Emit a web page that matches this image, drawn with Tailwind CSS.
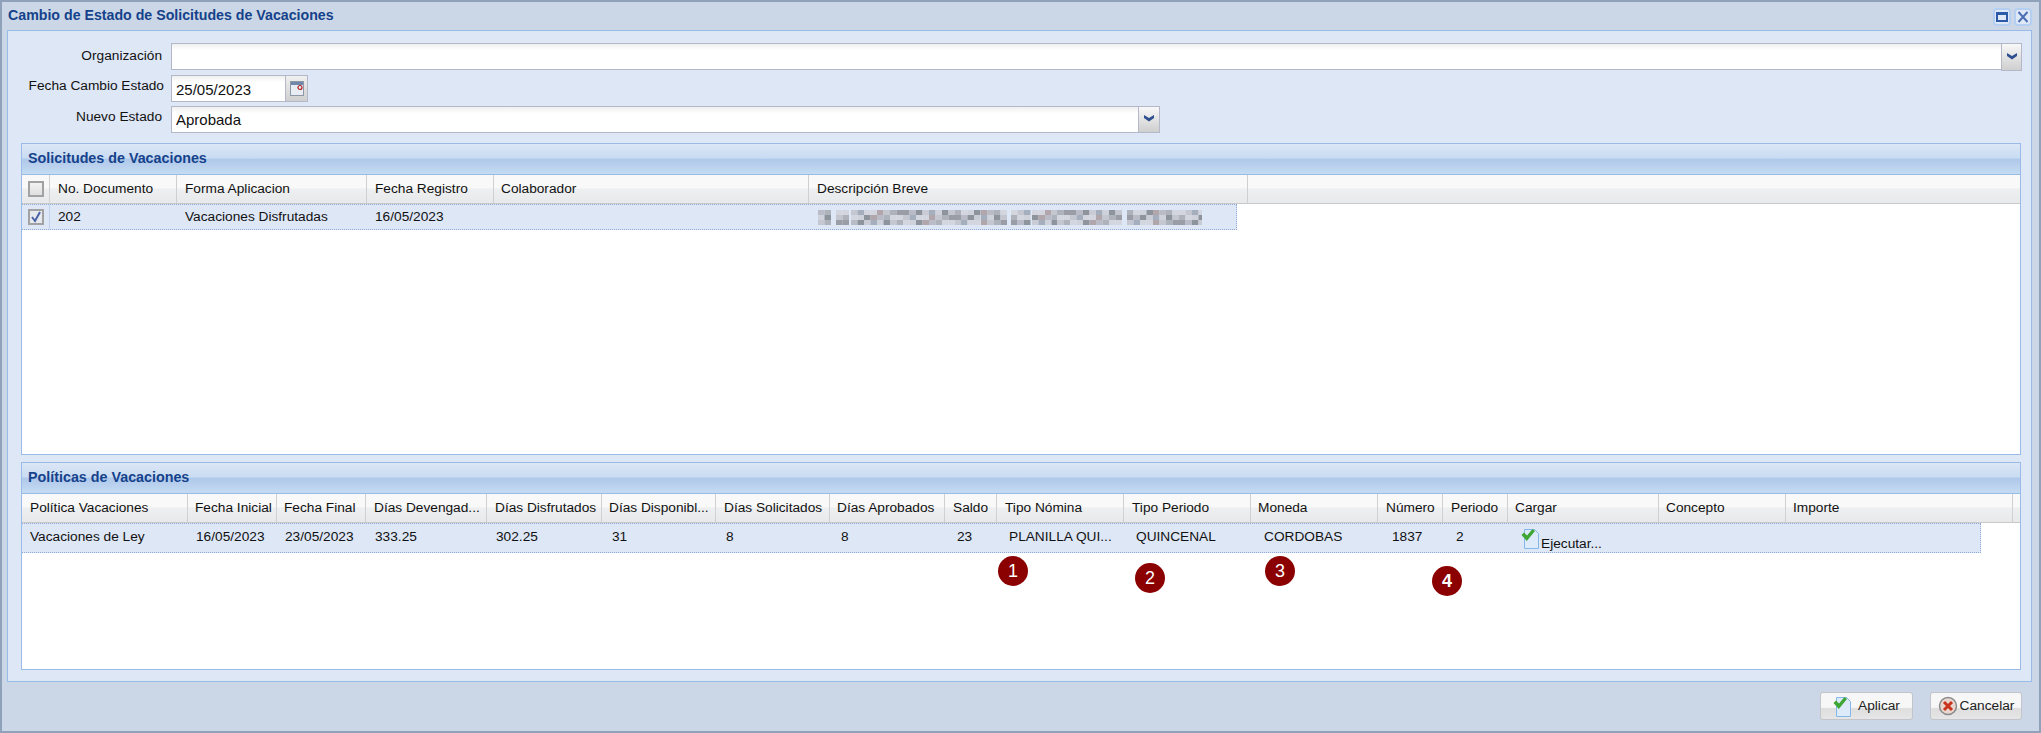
<!DOCTYPE html>
<html lang="es">
  <head>
    <meta charset="UTF-8">
    <title>Cambio de Estado de Solicitudes de Vacaciones</title>
    <script src="https://cdn.jsdelivr.net/npm/@tailwindcss/browser@4"></script>
  </head>

  <body class="bg-[#cbd7e6]">
    <div class="w-[2041px] h-[733px] overflow-hidden flex flex-col bg-[#cbd7e6] border-2 border-[#8fa2ba] font-['Liberation_Sans',Arial,sans-serif] text-[13.7px] text-[#111]">

      <!-- title -->
      <div class="h-[28px] shrink-0 flex items-center justify-between pl-[6px] pr-[7px]">
        <span class="font-bold text-[#15428b] text-[14.2px]">Cambio de Estado de Solicitudes de Vacaciones</span>
        <div class="flex gap-[3px] mt-[2px]">
          <div class="w-[18px] h-[18px] rounded-[4px] border-2 border-[#b5cff2] bg-[#dfe8f6] flex items-center justify-center">
            <div class="w-[12px] h-[10px] border-2 border-[#2c5aa8] border-t-[3px]"></div>
          </div>
          <div class="w-[18px] h-[18px] rounded-[4px] border-2 border-[#b5cff2] bg-[#dfe8f6] flex items-center justify-center">
            <svg width="12" height="12" viewBox="0 0 12 12"><path d="M1.500 1l9 10M10.500 1l-9 10" stroke="#4a6fb5" stroke-width="2" fill="none"/></svg>
          </div>
        </div>
      </div>

      <!-- main panel -->
      <div class="ml-[5px] mr-[7px] h-[652px] shrink-0 bg-[#dee7f6] border border-[#99bbe8] pt-[12px] px-[13px]">

        <div class="flex h-[27px]">
          <label class="w-[150px] shrink-0 text-right pr-[9px] pt-[3px]">Organización</label>
          <div class="w-[1851px] flex shrink-0">
            <div class="flex-1 border border-[#b5b8c8] border-r-0 bg-gradient-to-b from-[#efefef] to-white to-[25%]"></div>
            <div class="w-[21px] h-[28px] border border-[#b5b8c8] bg-gradient-to-b from-[#f8f8f8] to-[#cfcfcf] flex justify-center pt-[8px]">
              <svg width="12" height="8" viewBox="0 0 12 8"><path d="M1 1l5 3 5-3v3L6 7.500 1 4z" fill="#2f4f8f"/></svg>
            </div>
          </div>
        </div>

        <div class="flex h-[27px] mt-[5px]">
          <label class="w-[150px] shrink-0 text-right pr-[7px] pt-[1px]">Fecha Cambio Estado</label>
          <div class="w-[115px] border border-[#b5b8c8] bg-gradient-to-b from-[#efefef] to-white to-[25%] pl-[4px] pt-[3px] text-[15px]">25/05/2023</div>
          <div class="w-[22px] border border-[#b5b8c8] border-l-0 bg-gradient-to-b from-[#f0f0f0] to-[#cfcfcf] flex justify-center pt-[5px]">
            <svg width="14" height="15" viewBox="0 0 14 15"><rect x="0.500" y="0.500" width="13" height="14" fill="#e8edf3" stroke="#8c98a8"/><rect x="1" y="1" width="12" height="3" fill="#6f87a8"/><circle cx="10" cy="6.500" r="2" fill="none" stroke="#b02020" stroke-width="1.200"/></svg>
          </div>
        </div>

        <div class="flex h-[27px] mt-[4px]">
          <label class="w-[150px] shrink-0 text-right pr-[9px] pt-[1px]">Nuevo Estado</label>
          <div class="w-[967px] border border-[#b5b8c8] border-r-0 bg-gradient-to-b from-[#efefef] to-white to-[25%] pl-[4px] pt-[2px] text-[15px]">Aprobada</div>
          <div class="w-[22px] border border-[#b5b8c8] bg-gradient-to-b from-[#f8f8f8] to-[#cfcfcf] flex justify-center pt-[7px]">
            <svg width="12" height="8" viewBox="0 0 12 8"><path d="M1 1l5 3 5-3v3L6 7.500 1 4z" fill="#2f4f8f"/></svg>
          </div>
        </div>

        <!-- solicitudes -->
        <div class="mt-[10px] h-[312px] w-[2000px] border border-[#99bbe8] bg-white flex flex-col">
          <div class="h-[31px] shrink-0 border-b border-[#99bbe8] bg-[linear-gradient(#dbe6f6_0,#c9dcf2_47%,#afc8ea_50%,#c5dbf2_100%)] pl-[6px] flex items-center font-bold text-[#15428b] text-[14.3px]">Solicitudes de Vacaciones</div>
          <div class="grid grid-cols-[28px_127px_190px_127px_315px_439px_1fr] h-[29px] shrink-0 border-b border-[#c9c9c9] bg-[linear-gradient(#f9f9f9_0,#f9f9f9_45%,#eeeff0_50%,#e8e9eb_100%)]">
            <div class="border-r border-[#d0d0d0] flex items-center justify-center">
              <div class="w-[16px] h-[16px] border-2 border-[#a2a2a2] bg-[linear-gradient(#f2f2f2,#e0e0e0)]"></div>
            </div>
            <div class="border-r border-[#d0d0d0] pl-[8px] flex items-center">No. Documento</div>
            <div class="border-r border-[#d0d0d0] pl-[8px] flex items-center">Forma Aplicacion</div>
            <div class="border-r border-[#d0d0d0] pl-[8px] flex items-center">Fecha Registro</div>
            <div class="border-r border-[#d0d0d0] pl-[7px] flex items-center">Colaborador</div>
            <div class="border-r border-[#d0d0d0] pl-[8px] flex items-center">Descripción Breve</div>
            <div></div>
          </div>
          <div class="grid grid-cols-[28px_127px_190px_127px_315px_428px] w-[1215px] h-[26px] shrink-0 bg-[#dee7f6] border-y border-r border-dotted border-[#8fa8d6]">
            <div class="border-r border-[#bcd2f0] flex items-center justify-center">
              <div class="w-[16px] h-[16px] border-2 border-[#a2a2a2] bg-[#e6e9ee] flex items-center justify-center">
                <svg width="12" height="12" viewBox="0 0 12 12"><path d="M2 6l3 4 5-9" stroke="#4a62a8" stroke-width="2" fill="none"/></svg>
              </div>
            </div>
            <div class="pl-[8px] flex items-center">202</div>
            <div class="pl-[8px] flex items-center">Vacaciones Disfrutadas</div>
            <div class="pl-[8px] flex items-center">16/05/2023</div>
            <div></div>
            <div class="pl-[9px] flex items-center">
              <svg id="blur" width="384" height="15" viewBox="0 0 384 15" class="block"></svg>
            </div>
          </div>
        </div>

        <!-- politicas -->
        <div class="relative mt-[7px] h-[208px] w-[2000px] border border-[#99bbe8] bg-white flex flex-col">
          <div class="h-[31px] shrink-0 border-b border-[#99bbe8] bg-[linear-gradient(#dbe6f6_0,#c9dcf2_47%,#afc8ea_50%,#c5dbf2_100%)] pl-[6px] flex items-center font-bold text-[#15428b] text-[14.3px]">Políticas de Vacaciones</div>
          <div class="grid grid-cols-[166px_89px_89px_121px_115px_114px_114px_115px_52px_127px_127px_127px_65px_65px_151px_127px_227px_1fr] h-[29px] shrink-0 border-b border-[#c9c9c9] bg-[linear-gradient(#f9f9f9_0,#f9f9f9_45%,#eeeff0_50%,#e8e9eb_100%)] whitespace-nowrap overflow-hidden">
            <div class="border-r border-[#d0d0d0] pl-[8px] flex items-center">Política Vacaciones</div>
            <div class="border-r border-[#d0d0d0] pl-[7px] flex items-center">Fecha Inicial</div>
            <div class="border-r border-[#d0d0d0] pl-[7px] flex items-center">Fecha Final</div>
            <div class="border-r border-[#d0d0d0] pl-[8px] flex items-center">Días Devengad...</div>
            <div class="border-r border-[#d0d0d0] pl-[8px] flex items-center">Días Disfrutados</div>
            <div class="border-r border-[#d0d0d0] pl-[7px] flex items-center">Días Disponibl...</div>
            <div class="border-r border-[#d0d0d0] pl-[8px] flex items-center">Días Solicitados</div>
            <div class="border-r border-[#d0d0d0] pl-[7px] flex items-center">Días Aprobados</div>
            <div class="border-r border-[#d0d0d0] pl-[8px] flex items-center">Saldo</div>
            <div class="border-r border-[#d0d0d0] pl-[8px] flex items-center">Tipo Nómina</div>
            <div class="border-r border-[#d0d0d0] pl-[8px] flex items-center">Tipo Periodo</div>
            <div class="border-r border-[#d0d0d0] pl-[7px] flex items-center">Moneda</div>
            <div class="border-r border-[#d0d0d0] pl-[8px] flex items-center">Número</div>
            <div class="border-r border-[#d0d0d0] pl-[8px] flex items-center">Periodo</div>
            <div class="border-r border-[#d0d0d0] pl-[7px] flex items-center">Cargar</div>
            <div class="border-r border-[#d0d0d0] pl-[7px] flex items-center">Concepto</div>
            <div class="border-r border-[#d0d0d0] pl-[7px] flex items-center">Importe</div>
            <div></div>
          </div>
          <div class="grid grid-cols-[166px_89px_89px_121px_115px_114px_114px_115px_52px_127px_127px_127px_65px_65px_472px] w-[1959px] h-[30px] shrink-0 bg-[#dee7f6] border-y border-r border-dotted border-[#8fa8d6] whitespace-nowrap">
            <div class="pl-[8px] pb-[5px] flex items-center">Vacaciones de Ley</div>
            <div class="pl-[8px] pb-[5px] flex items-center">16/05/2023</div>
            <div class="pl-[8px] pb-[5px] flex items-center">23/05/2023</div>
            <div class="pl-[9px] pb-[5px] flex items-center">333.25</div>
            <div class="pl-[9px] pb-[5px] flex items-center">302.25</div>
            <div class="pl-[10px] pb-[5px] flex items-center">31</div>
            <div class="pl-[10px] pb-[5px] flex items-center">8</div>
            <div class="pl-[11px] pb-[5px] flex items-center">8</div>
            <div class="pl-[12px] pb-[5px] flex items-center">23</div>
            <div class="pl-[12px] pb-[5px] flex items-center">PLANILLA QUI...</div>
            <div class="pl-[12px] pb-[5px] flex items-center">QUINCENAL</div>
            <div class="pl-[13px] pb-[5px] flex items-center">CORDOBAS</div>
            <div class="pl-[14px] pb-[5px] flex items-center">1837</div>
            <div class="pl-[13px] pb-[5px] flex items-center">2</div>
            <div class="pl-[13px] flex items-start pt-[4px]">
              <svg width="19" height="21" viewBox="0 0 19 21" class="shrink-0"><path d="M3.500 1.500h10l4 4v15h-14z" fill="#dceafa" stroke="#85b8ea"/><path d="M0.500 7L3 4.500l3 3L11.500 1 14 3 5.800 13z" fill="#3fa535"/></svg>
              <span class="pt-[6px] ml-[1px]">Ejecutar...</span>
            </div>
          </div>
          <!-- numbered marks over the grid -->
          <div class="absolute left-[976px] top-[93px] w-[30px] h-[30px] rounded-full bg-[#8b0000] text-white flex items-center justify-center text-[18px]">1</div>
          <div class="absolute left-[1113px] top-[100px] w-[30px] h-[30px] rounded-full bg-[#8b0000] text-white flex items-center justify-center text-[18px]">2</div>
          <div class="absolute left-[1243px] top-[93px] w-[30px] h-[30px] rounded-full bg-[#8b0000] text-white flex items-center justify-center text-[18px]">3</div>
          <div class="absolute left-[1410px] top-[103px] w-[30px] h-[30px] rounded-full bg-[#8b0000] text-white flex items-center justify-center text-[18px] font-bold">4</div>
        </div>
      </div>

      <!-- buttons -->
      <div class="flex justify-end gap-[17px] pr-[17px] pt-[10px]">
        <button class="w-[93px] h-[28px] rounded-[3px] border border-[#c2c5c9] bg-[linear-gradient(#f7f7f7_0,#f7f7f7_55%,#dedede_60%,#e6e6e6_100%)] flex items-center justify-center gap-[6px] text-[#222]">
          <svg width="19" height="21" viewBox="0 0 19 21"><path d="M3.500 1.500h10l4 4v15h-14z" fill="#dceafa" stroke="#85b8ea"/><path d="M0.500 7L3 4.500l3 3L11.500 1 14 3 5.800 13z" fill="#3fa535"/></svg>
          Aplicar
        </button>
        <button class="w-[92px] h-[28px] rounded-[3px] border border-[#c2c5c9] bg-[linear-gradient(#f7f7f7_0,#f7f7f7_55%,#dedede_60%,#e6e6e6_100%)] flex items-center justify-center gap-[2px] text-[#222]">
          <svg width="20" height="20" viewBox="0 0 20 20"><circle cx="10" cy="10" r="8.500" fill="#e8d6cf" stroke="#8a8a8a" stroke-width="1.500"/><path d="M6 6l8 8M14 6l-8 8" stroke="#c8341c" stroke-width="3"/></svg>
          Cancelar
        </button>
      </div>
    </div>

    <script>
      // mosaic over the blurred description text
      var runs = [[0,13],[18,9],[33,105],[143,16],[163,25],[193,16],[214,20],[239,65],[309,75]];
      var colors = ['#c4c7cf','#aeb2ba','#d3d6de','#8e949c','#b9bcc6','#c9ccd4','#9a9ca6','#b0a6ac','#a4aebc','#cfd2da','#868c94'];
      var svg = '', n = 7;
      runs.forEach(function (r) {
        for (var x = r[0]; x < r[0] + r[1]; x += 6.500) {
          for (var y = 0; y < 3; y++) {
            n = (n * 31 + 11) % 101;
            svg += '<rect x="' + x + '" y="' + y * 5 + '" width="6.500" height="5" fill="' + colors[n % colors.length] + '"/>';
          }
        }
      });
      document.getElementById('blur').innerHTML = svg;
    </script>
  </body>
</html>
